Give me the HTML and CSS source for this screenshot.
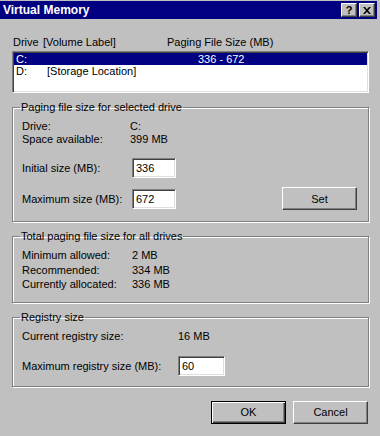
FILE: index.html
```html
<!DOCTYPE html>
<html lang="en">
<head>
  <meta charset="UTF-8">
  <title>Virtual Memory</title>
  <link rel="stylesheet" href="styles.css">
</head>
<body>

<div class="window">
  <div class="titlebar">
    <span class="title">Virtual Memory</span>
    <div class="caption-buttons">
      <button class="cap-btn help">?</button>
      <button class="cap-btn close">
        <svg width="8" height="7" viewBox="0 0 8 7">
          <path d="M0 0h2l2 2.3L6 0h2L5 3.5 8 7H6L4 4.7 2 7H0l3-3.5z" fill="#000"/>
        </svg>
      </button>
    </div>
  </div>

  <div class="content">
    <div class="list-head">
      <span>Drive</span>
      <span>[Volume Label]</span>
      <span>Paging File Size (MB)</span>
    </div>
    <div class="listbox">
      <div class="list-row selected"><span>C:</span><span></span><span>336 - 672</span></div>
      <div class="list-row"><span>D:</span><span>[Storage Location]</span><span></span></div>
    </div>

    <fieldset class="group group-drive">
      <legend>Paging file size for selected drive</legend>
      <div class="info-grid">
        <span>Drive:</span><span>C:</span>
        <span>Space available:</span><span>399 MB</span>
      </div>
      <div class="field-row first">
        <label>Initial size (MB):</label>
        <input type="text" class="textbox" value="336">
      </div>
      <div class="field-row second">
        <label>Maximum size (MB):</label>
        <input type="text" class="textbox" value="672">
        <button class="btn set-btn">Set</button>
      </div>
    </fieldset>

    <fieldset class="group group-total">
      <legend>Total paging file size for all drives</legend>
      <div class="info-grid wide">
        <span>Minimum allowed:</span><span>2 MB</span>
        <span>Recommended:</span><span>334 MB</span>
        <span>Currently allocated:</span><span>336 MB</span>
      </div>
    </fieldset>

    <fieldset class="group group-registry">
      <legend>Registry size</legend>
      <div class="info-grid registry">
        <span>Current registry size:</span><span>16 MB</span>
      </div>
      <div class="field-row registry-row">
        <label>Maximum registry size (MB):</label>
        <input type="text" class="textbox" value="60">
      </div>
    </fieldset>

    <div class="dialog-buttons">
      <button class="btn default">OK</button>
      <button class="btn">Cancel</button>
    </div>
  </div>
</div>

</body>
</html>
```

FILE: styles.css
```css
html, body {
  margin: 0;
  padding: 0;
  font-family: "Liberation Sans", Arial, sans-serif;
  font-size: 11px;
  color: #000;
  background: #c0c0c0;
}

.window {
  width: 380px;
  height: 436px;
  padding-top: 1px;
  box-sizing: border-box;
  background: #c0c0c0;
  overflow: hidden;
}

.titlebar {
  height: 18px;
  margin-right: 3px;
  padding: 0 2px 0 3px;
  background: #000080;
  color: #fff;
  display: flex;
  align-items: center;
  justify-content: space-between;
}

.title {
  font-weight: bold;
  font-size: 12px;
}

.caption-buttons {
  display: flex;
  gap: 2px;
}

.cap-btn {
  width: 16px;
  height: 14px;
  padding: 0;
  margin: 0;
  background: #c0c0c0;
  border: 1px solid;
  border-color: #fff #404040 #404040 #fff;
  box-shadow: inset -1px -1px #808080;
  display: flex;
  align-items: center;
  justify-content: center;
  font-family: "Liberation Sans", Arial, sans-serif;
  font-weight: bold;
  font-size: 11px;
  line-height: 12px;
  color: #000;
}

.content {
  padding: 0 11px 0 12px;
}

.list-head {
  margin-top: 17px;
  padding-left: 1px;
  height: 13px;
  line-height: 13px;
  display: grid;
  grid-template-columns: 30px 124px auto;
}

.listbox {
  margin-top: 2px;
  height: 42px;
  box-sizing: border-box;
  padding-top: 1px;
  background: #fff;
  border: 1px solid;
  border-color: #808080 #fff #fff #808080;
  box-shadow: inset 1px 1px #404040, inset -1px -1px #dfdfdf;
}

.list-row {
  height: 12px;
  line-height: 12px;
  margin: 0 1px;
  padding-left: 2px;
  display: grid;
  grid-template-columns: 31px 151px auto;
}

.list-row.selected {
  background: #000080;
  color: #fff;
}

.group {
  margin: 8px 0 0;
  padding: 6px 11px 11px 9px;
  border: 1px solid #808080;
  box-shadow: inset 1px 1px #fff, 1px 1px #fff;
  min-width: 0;
}

.group legend {
  padding: 0 1px;
  margin-left: -2px;
  line-height: 13px;
}

.info-grid {
  display: grid;
  grid-template-columns: 108px auto;
  line-height: 13px;
}

.info-grid.wide {
  grid-template-columns: 110px auto;
  line-height: 14.5px;
}

.info-grid.registry {
  grid-template-columns: 156px auto;
}

.group-total {
  padding-top: 5px;
  padding-bottom: 10px;
}

.group-registry {
  padding-bottom: 10px;
}

.field-row {
  display: flex;
  align-items: center;
}

.field-row label {
  width: 110px;
  flex: none;
}

.field-row.first {
  margin-top: 12px;
}

.field-row.second {
  margin-top: 9px;
}

.registry-row {
  margin-top: 13px;
}

.registry-row label {
  width: 156px;
}

.textbox {
  width: 44px;
  height: 20px;
  box-sizing: border-box;
  margin: 0;
  padding: 0 3px;
  font-family: "Liberation Sans", Arial, sans-serif;
  font-size: 11px;
  color: #000;
  background: #fff;
  border: 1px solid;
  border-color: #808080 #fff #fff #808080;
  box-shadow: inset 1px 1px #404040, inset -1px -1px #dfdfdf;
  outline: none;
}

.registry-row .textbox {
  width: 47px;
}

.btn {
  width: 75px;
  height: 23px;
  margin: 0;
  padding: 0;
  box-sizing: border-box;
  font-family: "Liberation Sans", Arial, sans-serif;
  font-size: 11px;
  color: #000;
  background: #c0c0c0;
  border: 1px solid;
  border-color: #fff #404040 #404040 #fff;
  box-shadow: inset -1px -1px #808080;
}

.btn.default {
  border: 1px solid #000;
  box-shadow: inset 1px 1px #fff, inset -1px -1px #404040, inset -2px -2px #808080;
}

.set-btn {
  margin-left: auto;
}

.dialog-buttons {
  margin-top: 14px;
  margin-right: 1px;
  display: flex;
  justify-content: flex-end;
  gap: 7px;
}
```
